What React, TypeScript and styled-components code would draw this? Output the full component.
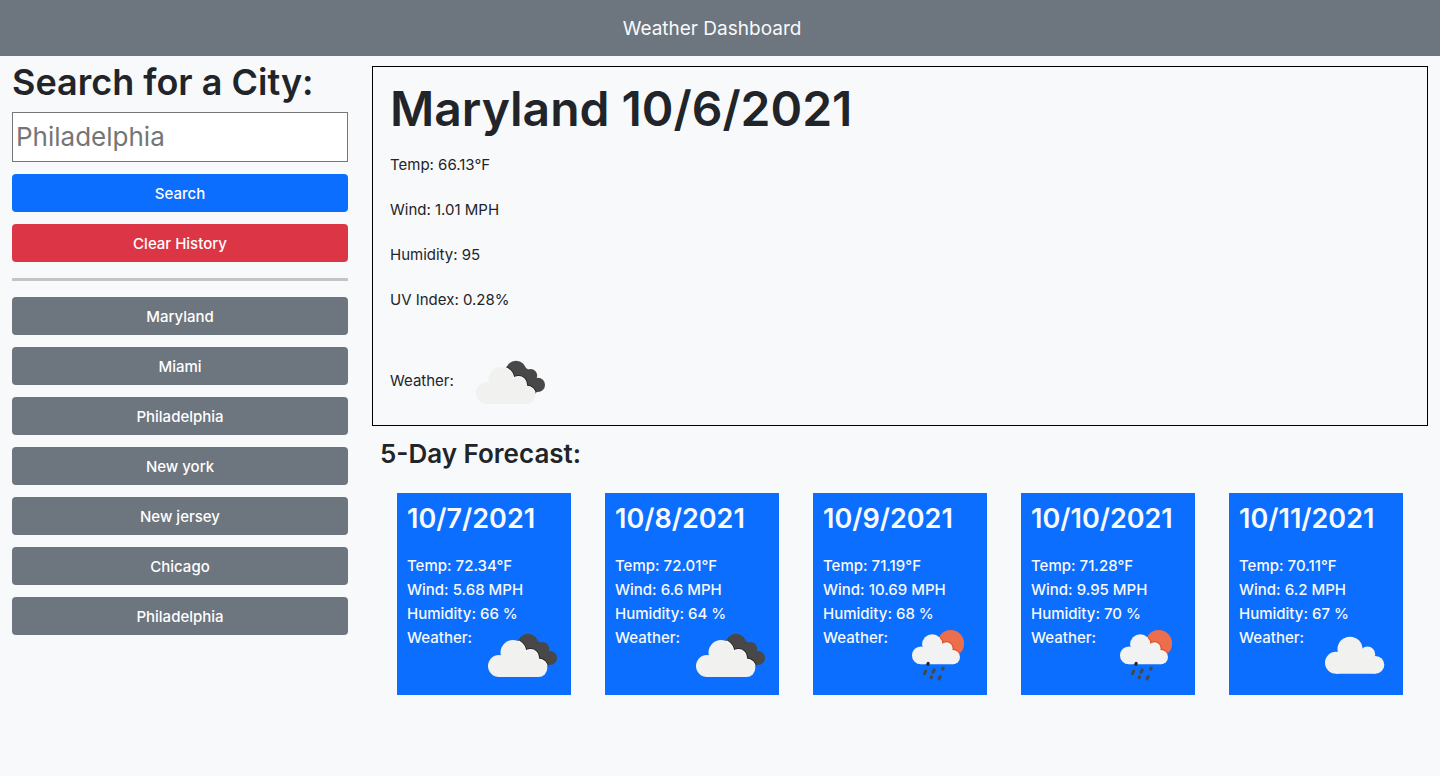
import React, { useId } from "react";
import styled, { createGlobalStyle, css } from "styled-components";

const GlobalStyle = createGlobalStyle`
  *, *::before, *::after { box-sizing: border-box; }
  body {
    margin: 0;
    background: #f8f9fb;
    color: #212529;
    font-family: Inter, "Liberation Sans", sans-serif;
    font-size: 15px;
    line-height: 24px;
  }
  h1, h2, h3, p { margin: 0; }
`;

const colors = {
  primary: "#0b6eff",
  danger: "#dc3545",
  secondary: "#6d757e",
};

const Navbar = styled.header`
  display: flex;
  align-items: center;
  justify-content: center;
  height: 56px;
  padding-top: 2px;
  background: ${colors.secondary};
`;

const Brand = styled.a`
  margin-right: 16px;
  color: #f8f9fa;
  font-size: 19px;
  line-height: 30px;
  text-decoration: none;
`;

const Columns = styled.div`
  display: grid;
  grid-template-columns: 1fr 3fr;
`;

const Sidebar = styled.aside`
  min-width: 0;
  padding: 2px 12px;
`;

const SearchForm = styled.form`
  display: flex;
  flex-direction: column;
  gap: 12px;
`;

const SearchLabel = styled.label`
  margin-bottom: -6px;
  font-size: 36px;
  font-weight: 600;
  line-height: 48px;
  white-space: nowrap;
`;

const SearchInput = styled.input`
  width: 100%;
  height: 50px;
  padding: 0 3px 2px;
  border: 1px solid #767676;
  border-radius: 0;
  background: #fff;
  color: inherit;
  font: inherit;
  font-size: 26px;

  &::placeholder {
    color: #757575;
    opacity: 1;
  }
`;

const Button = styled.button<{ $tone: keyof typeof colors }>`
  width: 100%;
  height: 38px;
  padding: 2px 12px 0;
  border: 0;
  border-radius: 4px;
  background: ${({ $tone }) => colors[$tone]};
  color: #fff;
  font: inherit;
  font-weight: 500;
  cursor: pointer;
`;

const Divider = styled.hr`
  height: 3px;
  margin: 16px 0;
  border: 0;
  background: #c3c4c6;
`;

const History = styled.div`
  display: flex;
  flex-direction: column;
  gap: 12px;
`;

const Main = styled.main`
  min-width: 0;
  padding: 10px 12px;
`;

const Current = styled.section`
  padding: 11px 17px 3px;
  border: 1px solid #000;
`;

const CurrentTitle = styled.h1`
  margin-bottom: 13px;
  font-size: 48px;
  font-weight: 600;
  line-height: 62px;
`;

const Reading = styled.p`
  margin-bottom: 21px;
`;

const WeatherRow = styled.div<{ $large?: boolean }>`
  display: flex;
  align-items: flex-start;

  ${({ $large }) =>
    $large &&
    css`
      gap: 6px;
      margin-top: 41px;

      span {
        padding-top: 16px;
      }
    `}
`;

const WeatherSvg = styled.svg`
  flex: none;
  display: block;
`;

const ForecastSection = styled.section`
  padding: 11px 8px;
`;

const ForecastTitle = styled.h2`
  margin-bottom: 22px;
  font-size: 26px;
  font-weight: 600;
  line-height: 34px;
`;

const ForecastGrid = styled.div`
  display: grid;
  grid-template-columns: repeat(5, 1fr);
  gap: 34px;
  padding: 0 17px;
`;

const Card = styled.article`
  min-width: 0;
  padding: 9px 0 0 10px;
  background: ${colors.primary};
  color: #f8f9fa;
  font-weight: 500;
`;

const CardDate = styled.h3`
  margin-bottom: 18px;
  font-size: 27px;
  font-weight: 600;
  line-height: 34px;
`;

type Sky = "broken" | "rain" | "cloud";

function CloudShape() {
  return (
    <>
      <circle cx="27" cy="41" r="11" />
      <circle cx="41" cy="27.5" r="12.5" />
      <circle cx="58.5" cy="32.5" r="7.7" />
      <circle cx="66.4" cy="43.1" r="8.9" />
      <path d="M27 52 L32 30 L45 32 L60 33 L66.4 52 Z" />
    </>
  );
}

function DarkCloudShape() {
  return (
    <>
      <circle cx="56" cy="19" r="10.3" />
      <circle cx="70.7" cy="23.6" r="6.5" />
      <circle cx="77.8" cy="32.9" r="7.2" />
      <path d="M48 24 L60 12 L72 20 L79 38 L70 46 Z" />
    </>
  );
}

const CLOUD = "#f1f1ef";

function WeatherIcon({ sky }: { sky: Sky }) {
  const clip = useId();
  const labels = { broken: "Broken clouds", rain: "Rain", cloud: "Cloudy" };
  return (
    <WeatherSvg width="90" height="69" viewBox="0 1 90 69" role="img" aria-label={labels[sky]}>
      {sky === "broken" && (
        <>
          <clipPath id={clip}>
            <DarkCloudShape />
          </clipPath>
          <g fill="#484849">
            <DarkCloudShape />
          </g>
          <g clipPath={`url(#${clip})`}>
            <g fill="#2a2a2c" stroke="#2a2a2c" strokeWidth="3.4">
              <CloudShape />
            </g>
            <g fill="#fff" stroke="#fff" strokeWidth="1.6">
              <CloudShape />
            </g>
          </g>
          <g fill={CLOUD}>
            <CloudShape />
          </g>
        </>
      )}
      {sky === "cloud" && (
        <g fill={CLOUD} transform="translate(5 -3.3)">
          <CloudShape />
        </g>
      )}
      {sky === "rain" && (
        <>
          <clipPath id={clip}>
            <circle cx="62.7" cy="18.4" r="13.4" />
          </clipPath>
          <circle cx="62.7" cy="18.4" r="13.4" fill="#ec6e4c" />
          <g clipPath={`url(#${clip})`}>
            <g fill="#e2502c" stroke="#e2502c" strokeWidth="3" transform="translate(11 -2.8) scale(0.81)">
              <CloudShape />
            </g>
          </g>
          <g fill="#f2f2f2" transform="translate(11 -2.8) scale(0.81)">
            <CloudShape />
          </g>
          <g stroke="#484849" strokeWidth="3.2" strokeLinecap="round">
            <path d="M36.5 48.6 L37.6 46.2" />
            <path d="M45 47.4 L46.2 45" />
            <path d="M51.1 53.8 L52.3 51.6" />
            <path d="M54.8 44 L55.2 43.2" />
            <path d="M43.1 52.7 L43.5 52" />
            <path d="M39.8 39.2 L40.2 38.4" stroke="#262628" />
          </g>
        </>
      )}
    </WeatherSvg>
  );
}

const cities = ["Maryland", "Miami", "Philadelphia", "New york", "New jersey", "Chicago", "Philadelphia"];

const readings = ["Temp: 66.13°F", "Wind: 1.01 MPH", "Humidity: 95", "UV Index: 0.28%"];

const forecast: { date: string; temp: string; wind: string; humidity: string; sky: Sky }[] = [
  { date: "10/7/2021", temp: "72.34", wind: "5.68", humidity: "66", sky: "broken" },
  { date: "10/8/2021", temp: "72.01", wind: "6.6", humidity: "64", sky: "broken" },
  { date: "10/9/2021", temp: "71.19", wind: "10.69", humidity: "68", sky: "rain" },
  { date: "10/10/2021", temp: "71.28", wind: "9.95", humidity: "70", sky: "rain" },
  { date: "10/11/2021", temp: "70.11", wind: "6.2", humidity: "67", sky: "cloud" },
];

export default function App() {
  return (
    <>
      <GlobalStyle />
      <Navbar>
        <Brand href="#">Weather Dashboard</Brand>
      </Navbar>
      <Columns>
        <Sidebar>
          <SearchForm onSubmit={(event) => event.preventDefault()}>
            <SearchLabel htmlFor="city">Search for a City:</SearchLabel>
            <SearchInput id="city" type="text" placeholder="Philadelphia" />
            <Button $tone="primary" type="submit">Search</Button>
            <Button $tone="danger" type="button">Clear History</Button>
          </SearchForm>
          <Divider />
          <History>
            {cities.map((city, index) => (
              <Button key={index} $tone="secondary" type="button">{city}</Button>
            ))}
          </History>
        </Sidebar>
        <Main>
          <Current>
            <CurrentTitle>Maryland 10/6/2021</CurrentTitle>
            {readings.map((reading) => (
              <Reading key={reading}>{reading}</Reading>
            ))}
            <WeatherRow $large>
              <span>Weather:</span>
              <WeatherIcon sky="broken" />
            </WeatherRow>
          </Current>
          <ForecastSection>
            <ForecastTitle>5-Day Forecast:</ForecastTitle>
            <ForecastGrid>
              {forecast.map((day) => (
                <Card key={day.date}>
                  <CardDate>{day.date}</CardDate>
                  <p>Temp: {day.temp}°F</p>
                  <p>Wind: {day.wind} MPH</p>
                  <p>Humidity: {day.humidity} %</p>
                  <WeatherRow>
                    <span>Weather:</span>
                    <WeatherIcon sky={day.sky} />
                  </WeatherRow>
                </Card>
              ))}
            </ForecastGrid>
          </ForecastSection>
        </Main>
      </Columns>
    </>
  );
}
